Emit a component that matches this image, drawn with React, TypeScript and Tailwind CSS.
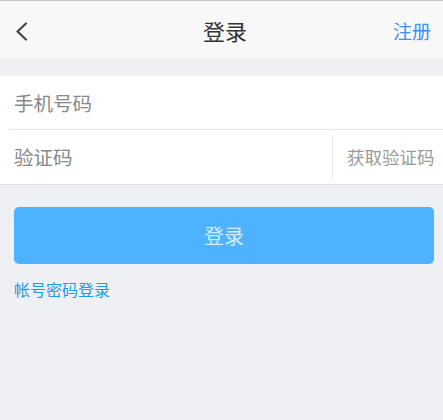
export default function App() {
  return (
    <div className="min-h-[420px] bg-[#eff0f4] font-['Noto_Sans_CJK_SC',sans-serif]">
      <header className="grid h-[59px] grid-cols-[1fr_auto_1fr] items-center border-t border-[#c4c4c4] bg-[#f8f8f8] pl-[15px] pr-[12px]">
        <svg width="13" height="19" viewBox="0 0 13 19" fill="none" className="mt-[2px]">
          <path d="M11 1.5 L2.5 9.5 L11 17.5" stroke="#444" strokeWidth="2.2" strokeLinecap="round" strokeLinejoin="round" />
        </svg>
        <h1 className="pl-[4px] text-[22px] leading-none text-[#333]">登录</h1>
        <span className="justify-self-end text-[19px] leading-none text-[#3d8ff5]">注册</span>
      </header>

      <div className="mt-[17px] border-b border-[#e2e2e2] bg-white">
        <div className="ml-[9px] flex h-[54px] items-center border-b border-[#e6e6e6] pl-[5px]">
          <span className="text-[19.5px] text-[#888]">手机号码</span>
        </div>
        <div className="flex h-[54px] items-center">
          <span className="flex-1 pl-[14px] text-[19.5px] text-[#888]">验证码</span>
          <div className="h-[44px] w-px bg-[#e4e4e4]" />
          <span className="w-[110px] pl-[14px] text-[17.5px] text-[#9a9a9a]">获取验证码</span>
        </div>
      </div>

      <div className="pl-[14px] pr-[9px] pt-[22px]">
        <button className="flex h-[57px] w-full items-center justify-center rounded-[5px] bg-[#4db3ff] text-[20px] text-[#d3ebfd]">
          登录
        </button>
        <div className="mt-[17px] text-[16px] leading-none text-[#1c9bf0]">帐号密码登录</div>
      </div>
    </div>
  )
}
